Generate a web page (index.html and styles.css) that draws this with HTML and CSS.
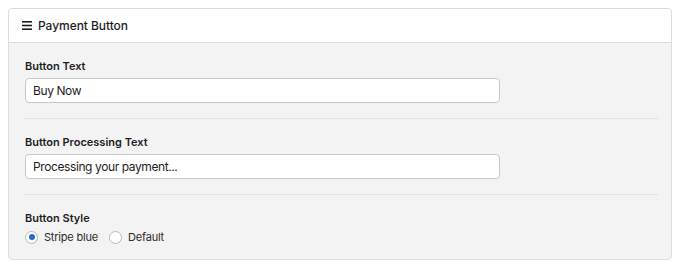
FILE: index.html
```html
<!DOCTYPE html>
<html>
<head>
<meta charset="utf-8">
<link rel="stylesheet" href="styles.css">
</head>
<body>
<div class="card">
  <div class="card-header">
    <svg class="menu-icon" width="10" height="9" viewBox="0 0 10 9"><rect x="0" y="0" width="10" height="1.6" fill="#1e1e1e"/><rect x="0" y="3.7" width="10" height="1.6" fill="#1e1e1e"/><rect x="0" y="7.4" width="10" height="1.6" fill="#1e1e1e"/></svg>
    <span class="card-title">Payment Button</span>
  </div>
  <div class="card-body">
    <div class="field">
      <label class="field-label">Button Text</label>
      <div class="input">Buy Now</div>
    </div>
    <div class="field">
      <label class="field-label">Button Processing Text</label>
      <div class="input">Processing your payment...</div>
    </div>
    <div class="field last">
      <label class="field-label">Button Style</label>
      <div class="radios">
        <span class="radio-item"><span class="radio checked"></span>Stripe blue</span>
        <span class="radio-item"><span class="radio"></span>Default</span>
      </div>
    </div>
  </div>
</div>
</body>
</html>
```

FILE: styles.css
```css
* { box-sizing: border-box; }
body {
  margin: 0;
  padding: 8px;
  background: #ffffff;
  font-family: Inter, "Noto Sans", "Liberation Sans", sans-serif;
  color: #1e1e1e;
}
.card {
  width: 664px;
  border: 1px solid #dcdcde;
  border-radius: 4px;
  background: #f3f3f3;
  overflow: hidden;
}
.card-header {
  height: 34px;
  background: #ffffff;
  border-bottom: 1px solid #dcdcde;
  display: flex;
  align-items: center;
  padding-left: 13px;
  gap: 6px;
}
.card-title {
  font-size: 12px;
  font-weight: 500;
  color: #1e1e1e;
  letter-spacing: -0.05px;
}
.card-body {
  padding: 0 13px 0 16px;
}
.field {
  padding: 16px 0 15px;
  border-bottom: 1px solid #e2e2e2;
}
.field.last {
  border-bottom: none;
  padding-bottom: 15px;
}
.field-label {
  display: block;
  font-size: 11px;
  font-weight: 600;
  color: #1e1e1e;
  line-height: 14px;
  margin-bottom: 5px;
}
.input {
  width: 475px;
  height: 25px;
  background: #ffffff;
  border: 1px solid #c8c8c8;
  border-radius: 4px;
  font-size: 12px;
  letter-spacing: -0.4px;
  line-height: 23px;
  padding-left: 7px;
  color: #1e1e1e;
}
.radios {
  display: flex;
  align-items: center;
  gap: 11px;
  height: 14px;
  margin-top: 3px;
}
.radio-item {
  display: flex;
  align-items: center;
  gap: 6px;
  font-size: 11px;
  letter-spacing: -0.2px;
  color: #2c2c2c;
}
.radio {
  width: 13px;
  height: 13px;
  border: 1px solid #b8b8b8;
  border-radius: 50%;
  background: #ffffff;
  display: flex;
  align-items: center;
  justify-content: center;
}
.radio.checked::after {
  content: "";
  width: 6px;
  height: 6px;
  border-radius: 50%;
  background: #2271c4;
}
```
